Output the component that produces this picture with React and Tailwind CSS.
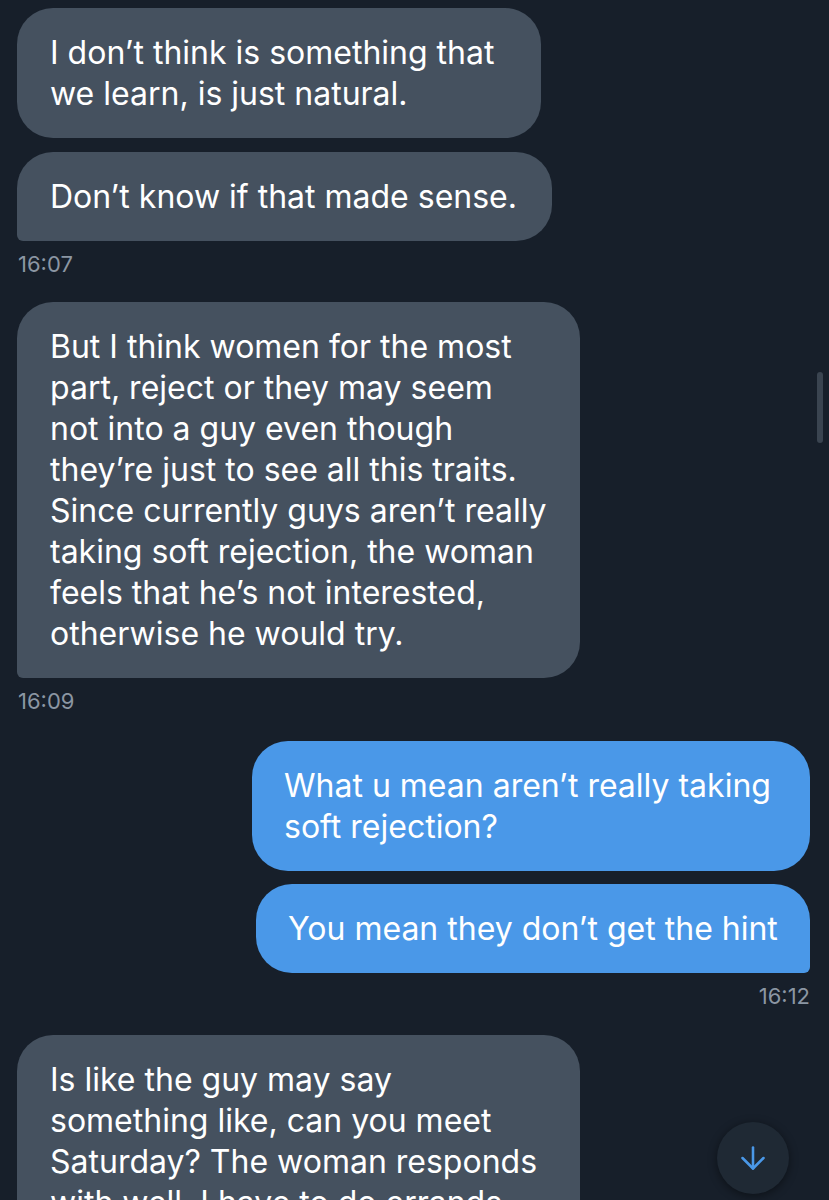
import { ArrowDown } from "lucide-react";

const font = { fontFamily: "Inter, 'Noto Sans', sans-serif" };

function Received({ lines, width, last }) {
  return (
    <div
      className={`bg-[#45515f] text-white text-[32px] leading-[41px] pl-[33px] pt-[24px] pb-[24px] rounded-[36px] ${
        last ? "rounded-bl-[6px]" : ""
      } ${width}`}
    >
      {lines.map((l, i) => (
        <div key={i} className="whitespace-nowrap">
          {l}
        </div>
      ))}
    </div>
  );
}

function Sent({ lines, width, last }) {
  return (
    <div
      className={`self-end bg-[#4a98e8] text-white text-[32px] leading-[41px] pl-[32px] pt-[24px] pb-[24px] rounded-[36px] ${
        last ? "rounded-br-[6px]" : ""
      } ${width}`}
    >
      {lines.map((l, i) => (
        <div key={i} className="whitespace-nowrap">
          {l}
        </div>
      ))}
    </div>
  );
}

function Time({ children, right }) {
  return (
    <div
      className={`text-[#8b96a3] text-[22px] leading-[26px] mt-[10px] ${
        right ? "self-end" : "pl-[1px]"
      }`}
    >
      {children}
    </div>
  );
}

export default function App() {
  return (
    <div
      className="relative w-[829px] h-[1200px] overflow-hidden bg-[#171f2a]"
      style={font}
    >
      <div className="flex flex-col pl-[17px] pr-[19px] pt-[8px]">
        <Received
          width="w-[524px]"
          lines={["I don’t think is something that", "we learn, is just natural."]}
        />
        <div className="h-[14px]" />
        <Received
          width="w-[535px]"
          last
          lines={["Don’t know if that made sense."]}
        />
        <Time>16:07</Time>

        <div className="h-[25px]" />
        <Received
          width="w-[563px]"
          last
          lines={[
            "But I think women for the most",
            "part, reject or they may seem",
            "not into a guy even though",
            "they’re just to see all this traits.",
            "Since currently guys aren’t really",
            "taking soft rejection, the woman",
            "feels that he’s not interested,",
            "otherwise he would try.",
          ]}
        />
        <Time>16:09</Time>

        <div className="h-[27px]" />
        <Sent
          width="w-[558px]"
          lines={["What u mean aren’t really taking", "soft rejection?"]}
        />
        <div className="h-[13px]" />
        <Sent
          width="w-[554px]"
          last
          lines={["You mean they don’t get the hint"]}
        />
        <Time right>16:12</Time>

        <div className="h-[26px]" />
        <Received
          width="w-[563px]"
          lines={[
            "Is like the guy may say",
            "something like, can you meet",
            "Saturday? The woman responds",
            "with well, I have to do errands",
          ]}
        />
      </div>

      {/* scrollbar thumb */}
      <div className="absolute left-[817px] top-[372px] w-[6px] h-[71px] rounded-full bg-[#3a4450]" />

      {/* scroll to bottom */}
      <div className="absolute left-[717px] top-[1122px] w-[72px] h-[72px] rounded-full bg-[#1f2934] shadow-[0_2px_10px_rgba(0,0,0,0.45)] flex items-center justify-center">
        <ArrowDown size={36} strokeWidth={1.7} className="text-[#4a98e8]" />
      </div>
    </div>
  );
}
